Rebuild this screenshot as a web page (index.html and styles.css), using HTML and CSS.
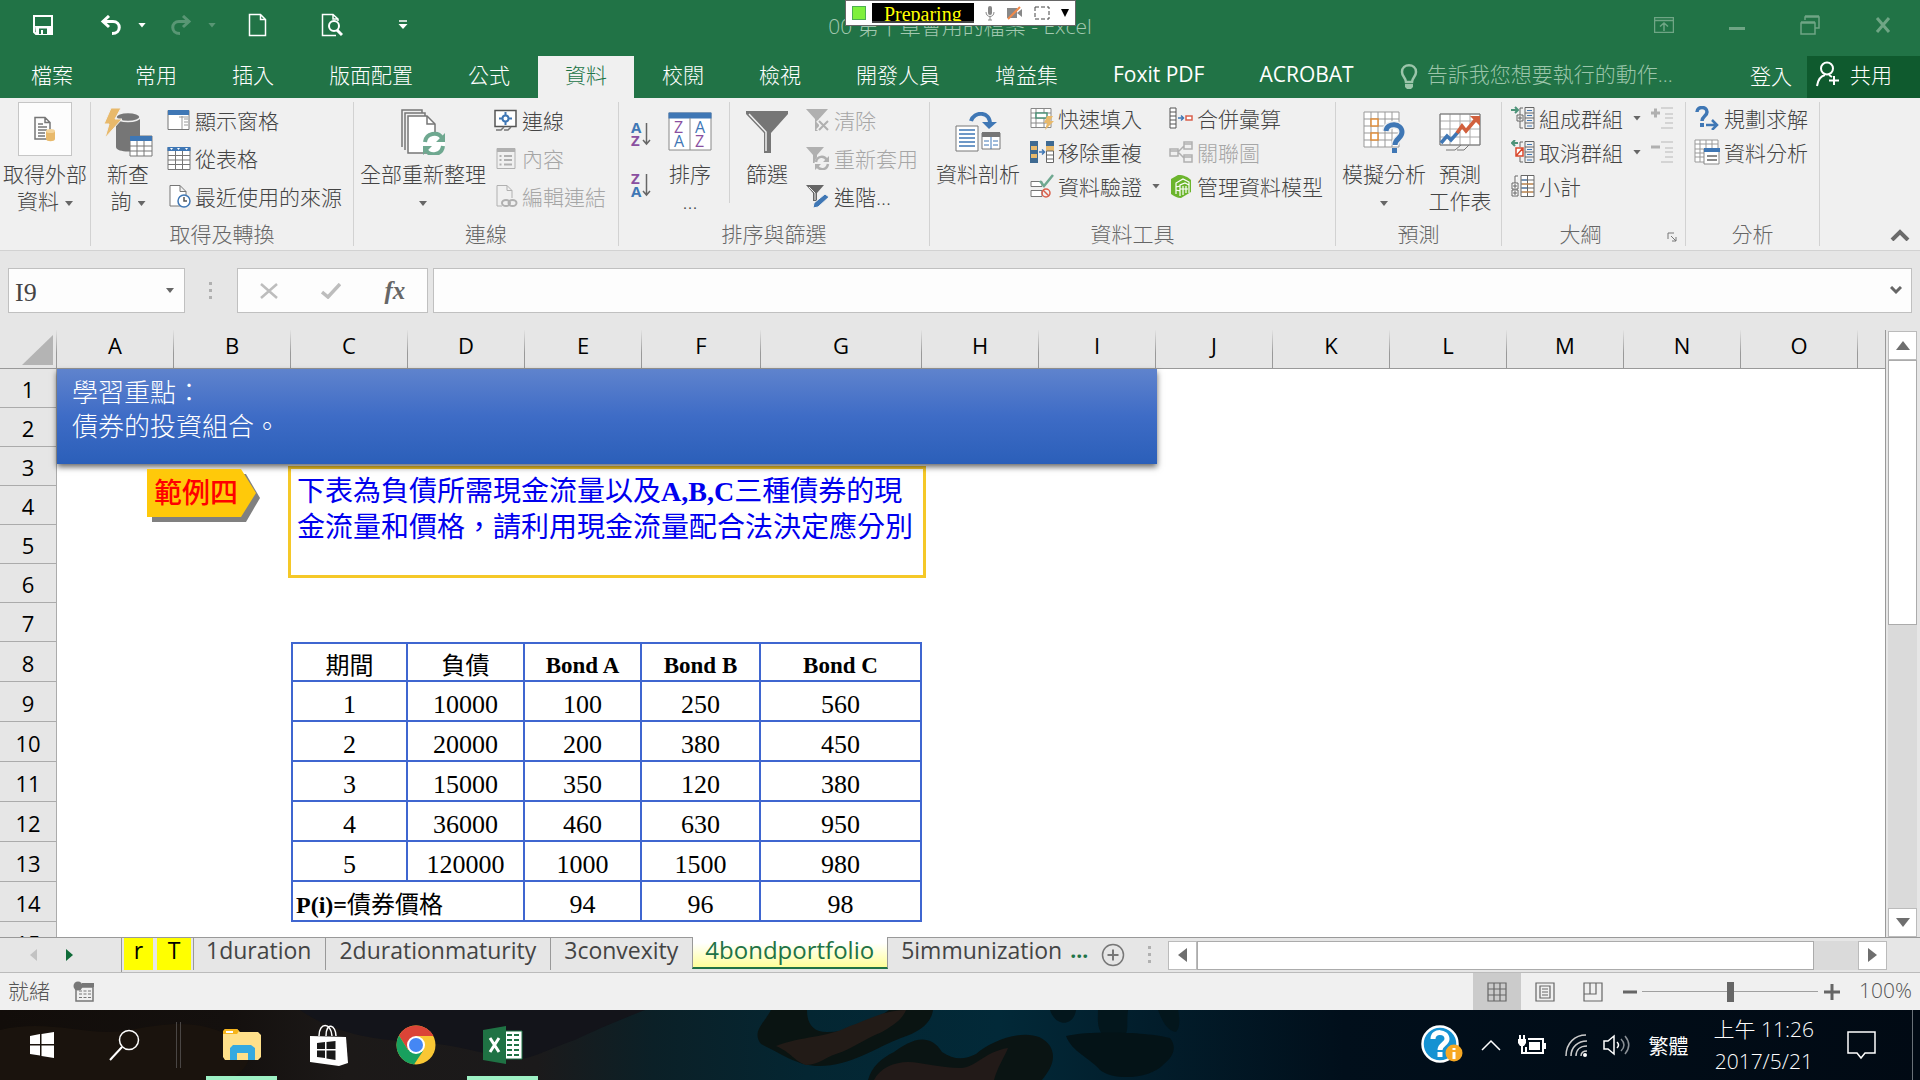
FILE: index.html
```html
<!DOCTYPE html>
<html lang="zh-Hant">
<head>
    <meta charset="UTF-8">
    <meta name="viewport" content="width=device-width, initial-scale=1.0">
    <title>00 第十章會用的檔案 - Excel</title>
    <link rel="stylesheet" href="styles.css">
</head>
<body>
    <header class="titlebar">
        <div class="quick-access">
            <button class="qa-btn" title="儲存檔案"><svg width="20" height="20" viewBox="0 0 20 20"><path d="M1 1h18v18H3l-2-2z" fill="none" stroke="#fff" stroke-width="2"/><path d="M2 11h16v8H3z" fill="#fff"/><path d="M6 13.500h8V19H6z" fill="#217346"/><path d="M8 15h2v4H8z" fill="#fff"/></svg></button>
            <div class="qa-pair">
                <button class="qa-btn" title="復原"><svg width="22" height="20" viewBox="0 0 22 20"><path d="M9 1L3 6.500l6 5.500M3 6.500h10c8 0 9 12-1 12" fill="none" stroke="#fff" stroke-width="3"/></svg></button>
                <button class="arrow" title="復原清單"></button>
            </div>
            <div class="qa-pair faded">
                <button class="qa-btn" title="重複"><svg width="22" height="20" viewBox="0 0 22 20"><path d="M13 1l6 5.500-6 5.500M19 6.500H9c-8 0-9 12 1 12" fill="none" stroke="#fff" stroke-width="3"/></svg></button>
                <button class="arrow" title="重複清單"></button>
            </div>
            <button class="qa-btn qa-new" title="新增"><svg width="20" height="24" viewBox="0 0 20 24"><path d="M1.500 1.500h11l5 5v16h-16zM12.500 1.500v5h5" fill="none" stroke="#fff" stroke-width="1.500"/></svg></button>
            <button class="qa-btn qa-preview" title="預覽列印"><svg width="22" height="24" viewBox="0 0 22 24"><path d="M17 8V6l-5-4.500H1.500v21H15M12 1.500V6h5" fill="none" stroke="#fff" stroke-width="1.500"/><circle cx="13" cy="13" r="5" fill="none" stroke="#fff" stroke-width="2"/><path d="M16 17l5 5" stroke="#fff" stroke-width="3"/></svg></button>
            <button class="qa-more" title="自訂快速存取工具列"><svg width="12" height="10" viewBox="0 0 12 10"><path d="M2 1h8" stroke="#fff" stroke-width="1.500"/><path d="M1.500 4h9L6 9z" fill="#fff"/></svg></button>
        </div>
        <h1 class="doc-title">00 第十章會用的檔案 - Excel</h1>
        <div class="window-btns">
            <button title="功能區顯示選項"><svg width="20" height="16" viewBox="0 0 20 16"><path d="M.500.500h19v15H.500zM.500 3.500h19M10 14V6M6 9.500L10 6l4 3.500" fill="none" stroke="currentColor" stroke-width="1.500"/></svg></button>
            <button title="最小化"><svg width="16" height="16" viewBox="0 0 16 16"><path d="M0 11.500h16" stroke="currentColor" stroke-width="3"/></svg></button>
            <button title="往下還原"><svg width="20" height="20" viewBox="0 0 20 20"><path d="M5 5V2h14v11h-4M5 1h14" fill="none" stroke="currentColor" stroke-width="1.500"/><path d="M1 8h14v11H1zM1 7h14" fill="none" stroke="currentColor" stroke-width="1.500"/></svg></button>
            <button title="關閉"><svg width="16" height="16" viewBox="0 0 16 16"><path d="M2 1l12 14M14 1L2 15" stroke="currentColor" stroke-width="3"/></svg></button>
        </div>
        <!-- 錄影工具列 -->
        <div class="recorder">
            <span class="rec-light"></span>
            <span class="rec-state">Preparing</span>
            <svg width="10" height="15" viewBox="0 0 10 15"><rect x="3" width="4" height="9" rx="2" fill="#888"/><path d="M1 6c0 6 8 6 8 0M5 11v3M3 14h4" fill="none" stroke="#888"/></svg>
            <svg width="17" height="14" viewBox="0 0 17 14"><path d="M1 2h10v10H1zM11 7l5-4v8z" fill="#888"/><path d="M2 13L14 1" stroke="#f08a4b" stroke-width="2"/></svg>
            <svg width="16" height="14" viewBox="0 0 16 14"><rect x="1" y="1" width="14" height="12" fill="none" stroke="#444" stroke-dasharray="4 2"/></svg>
            <svg width="8" height="8" viewBox="0 0 8 8"><path d="M0 0h8L4 8z"/></svg>
        </div>
    </header>

    <nav class="tabs">
        <button class="tab file">檔案</button>
        <button class="tab">常用</button>
        <button class="tab">插入</button>
        <button class="tab">版面配置</button>
        <button class="tab">公式</button>
        <button class="tab active">資料</button>
        <button class="tab">校閱</button>
        <button class="tab">檢視</button>
        <button class="tab">開發人員</button>
        <button class="tab">增益集</button>
        <button class="tab latin">Foxit PDF</button>
        <button class="tab latin">ACROBAT</button>
        <label class="tell-me">
            <svg width="18" height="26" viewBox="0 0 18 26"><path d="M6 18c0-4-4-5-4-10 0-9 14-9 14 0 0 5-4 6-4 10z" fill="none" stroke="#9bc5aa" stroke-width="2.500"/><path d="M5 20h8v3l-2 2H7l-2-2z" fill="#9bc5aa"/></svg>
            <input type="text" placeholder="告訴我您想要執行的動作..." aria-label="告訴我您想要執行的動作">
        </label>
        <button class="sign-in">登入</button>
        <button class="share">
            <svg width="24" height="26" viewBox="0 0 24 26"><circle cx="11" cy="7.500" r="6" fill="none" stroke="#fff" stroke-width="2"/><path d="M1 25c1-7 4-10 8-11M13 14l3 2M18 15v9M13 19.500h10" fill="none" stroke="#fff" stroke-width="2"/></svg>
            共用
        </button>
    </nav>

    <section class="ribbon">
        <div class="group g-external">
            <div class="group-body">
                <button class="big">
                    <span class="big-icon"><span class="framed"><svg width="24" height="26" viewBox="0 0 24 26"><path d="M2 1.500h10l5 5V23H2zM12 1.500v5h5M5 8h5M5 11h9M5 14h9M5 17h7M5 20h7" fill="none" stroke="#767676" stroke-width="1.500"/><path d="M13 15v8c0 3 9 3 9 0v-8z" fill="#e8b96b"/><ellipse cx="17.500" cy="15" rx="4.500" ry="2" fill="#f3d49c"/></svg></span></span>
                    取得外部<br>資料<i class="arrow"></i>
                </button>
            </div>
        </div>

        <div class="group g-transform">
            <div class="group-body">
                <button class="big">
                    <span class="big-icon"><svg width="50" height="50" viewBox="0 0 50 50"><path d="M13 10v30c0 6 24 6 24 0V10z" fill="#767676"/><ellipse cx="25" cy="10" rx="12" ry="4.500" fill="#767676" stroke="#f0f0f0" stroke-width="1.500"/><path d="M8 1h10l-6 11h7L2 31l4-14H1z" fill="#e8b96b" stroke="#f0f0f0"/><path d="M27 29h22v20H27z" fill="#fff" stroke="#767676"/><path d="M27 29h22v5H27z" fill="#3f77b5"/><path d="M27 39h22M27 44h22M34 34v15M41 34v15" stroke="#767676"/></svg></span>
                    新查<br>詢<i class="arrow"></i>
                </button>
                <div class="list">
                    <button class="cmd"><svg width="24" height="24" viewBox="0 0 24 24"><path d="M1 2.500h21v19H1z" fill="#fff" stroke="#767676"/><path d="M1 2h21v5H1z" fill="#3f77b5"/><path d="M15 8v13M17 11h4M17 14h4M17 17h4M12 9h9" stroke="#999"/></svg>顯示窗格</button>
                    <button class="cmd"><svg width="24" height="24" viewBox="0 0 24 24"><path d="M1 1.500h22v22H1z" fill="#fff" stroke="#767676"/><path d="M.500 1h23v4H.500z" fill="#3f77b5"/><path d="M3 2h3l-1.500 2zM10 2h3l-1.500 2zM18 2h3l-1.500 2z" fill="#fff"/><path d="M1 9.500h22M1 14h22M1 18.500h22M8.500 5v18M15.500 5v18" stroke="#767676"/></svg>從表格</button>
                    <button class="cmd"><svg width="24" height="24" viewBox="0 0 24 24"><path d="M3 1.500h10l6 6V22H3zM13 1.500v6h6" fill="#fff" stroke="#767676"/><circle cx="17" cy="17" r="6" fill="#fff" stroke="#3f77b5" stroke-width="1.500"/><path d="M17 13v4h3" fill="none" stroke="#555" stroke-width="1.500"/></svg>最近使用的來源</button>
                </div>
            </div>
            <div class="group-name">取得及轉換</div>
        </div>

        <div class="group g-connect">
            <div class="group-body">
                <button class="big wide">
                    <span class="big-icon"><svg width="46" height="46" viewBox="0 0 46 46"><path d="M2 38V1h20v3M5 41V4h20v3" fill="none" stroke="#767676" stroke-width="1.500"/><path d="M8 7h19l8 8v29H8z" fill="#fff" stroke="#767676" stroke-width="1.500"/><path d="M27 7v8h8" fill="none" stroke="#767676" stroke-width="1.500"/><circle cx="34" cy="35" r="11" fill="#fff"/><path d="M25 33c1-9 13-11 17-4M43 37c-1 9-13 11-17 4" fill="none" stroke="#6fa890" stroke-width="4"/><path d="M45 24v9h-9zM23 46v-9h9z" fill="#6fa890"/></svg></span>
                    全部重新整理<br><i class="arrow"></i>
                </button>
                <div class="list">
                    <button class="cmd"><svg width="24" height="24" viewBox="0 0 24 24"><path d="M1 2.500h21v16H1z" fill="#fff" stroke="#555" stroke-width="1.500"/><circle cx="11.500" cy="10.500" r="3" fill="none" stroke="#3f77b5" stroke-width="2"/><path d="M11.500 4v4M11.500 13v4M5 10.500h4M14 10.500h4" stroke="#3f77b5" stroke-width="2"/><path d="M2 22h5l3-3M10 22h4l3-3" fill="none" stroke="#767676" stroke-width="1.500"/></svg>連線</button>
                    <button class="cmd" disabled><svg width="24" height="24" viewBox="0 0 24 24"><path d="M3 2.500h18v20H3z" fill="none" stroke="#b0b0b0"/><path d="M3 2h18v4H3z" fill="#b0b0b0"/><path d="M10 10h8M10 14h8M10 18.500h8M5.500 10h2M5.500 14h2M5.500 18.500h2" stroke="#b0b0b0" stroke-width="2"/></svg>內容</button>
                    <button class="cmd" disabled><svg width="24" height="24" viewBox="0 0 24 24"><path d="M8 22H3V1.500h10l5 5V14M13 1.500v5h5" fill="none" stroke="#b0b0b0"/><ellipse cx="12" cy="19" rx="4" ry="3" fill="none" stroke="#b0b0b0" stroke-width="2"/><ellipse cx="18.500" cy="19" rx="4" ry="3" fill="none" stroke="#b0b0b0" stroke-width="2"/></svg>編輯連結</button>
                </div>
            </div>
            <div class="group-name">連線</div>
        </div>

        <div class="group g-sort">
            <div class="group-body">
                <div class="az">
                    <button title="從A到Z排序"><svg width="22" height="28" viewBox="0 0 22 28"><text x="1" y="13" class="az-a">A</text><text x="1" y="26" class="az-z">Z</text><path d="M16.500 3v21M13 20l3.500 4 3.500-4" fill="none" stroke="#666" stroke-width="1.500"/></svg></button>
                    <button title="從Z到A排序"><svg width="22" height="28" viewBox="0 0 22 28"><text x="1" y="13" class="az-z">Z</text><text x="1" y="26" class="az-a">A</text><path d="M16.500 3v21M13 20l3.500 4 3.500-4" fill="none" stroke="#666" stroke-width="1.500"/></svg></button>
                </div>
                <button class="big sort">
                    <span class="big-icon"><svg width="44" height="40" viewBox="0 0 44 40"><path d="M1 1h42v37H1z" fill="#fff" stroke="#888"/><path d="M.500.500h43v6H.500z" fill="#3f77b5"/><path d="M22 6v32" stroke="#888"/><text x="6" y="21" class="az-z thin">Z</text><text x="6" y="35" class="az-a thin">A</text><text x="27" y="21" class="az-a thin">A</text><text x="27" y="35" class="az-z thin">Z</text></svg></span>
                    排序<br>...
                </button>
                <button class="big filter">
                    <span class="big-icon"><svg width="42" height="44" viewBox="0 0 42 44"><path d="M0 1h42v3L25 23v20h-7V23L0 4z" fill="#767676"/><path d="M3 4l17 18v19" fill="none" stroke="#f0f0f0" stroke-width="1.500"/></svg></span>
                    篩選
                </button>
                <div class="list">
                    <button class="cmd" disabled><svg width="24" height="24" viewBox="0 0 24 24"><path d="M0 1h22l-9 10v12H9V11z" fill="#b0b0b0"/><path d="M12 12l10 11M22 12L12 23" stroke="#f0f0f0" stroke-width="5"/><path d="M13 13l9 9M22 13l-9 9" stroke="#b0b0b0" stroke-width="2"/></svg>清除</button>
                    <button class="cmd" disabled><svg width="24" height="24" viewBox="0 0 24 24"><path d="M0 1h18l-7 8v8H7V9z" fill="#b0b0b0"/><circle cx="16" cy="17" r="7.500" fill="#f0f0f0"/><path d="M10 16c1-6 8-7 11-2M22 18c-1 6-8 7-11 2" fill="none" stroke="#b0b0b0" stroke-width="2.500"/><path d="M23 10v6h-6zM9 24v-6h6z" fill="#b0b0b0"/></svg>重新套用</button>
                    <button class="cmd"><svg width="24" height="24" viewBox="0 0 24 24"><path d="M0 1h18l-7 8v8H7V9z" fill="#666"/><path d="M3 3l6 6v7" fill="none" stroke="#f0f0f0"/><path d="M19 10l4 3-11 10-5 1 1-5z" fill="#3f77b5" stroke="#f0f0f0"/></svg>進階...</button>
                </div>
            </div>
            <div class="group-name">排序與篩選</div>
        </div>

        <div class="group g-tools">
            <div class="group-body">
                <button class="big four">
                    <span class="big-icon"><svg width="46" height="40" viewBox="0 0 46 40"><path d="M1 14h22v25H1z" fill="#fff" stroke="#767676"/><path d="M4 18h16M4 22h16M4 26h16M4 30h16M4 34h16" stroke="#3f77b5" stroke-width="1.500"/><path d="M27 21h18v16H27z" fill="#fff" stroke="#767676"/><path d="M27 20h18v5H27z" fill="#767676"/><path d="M36 25v12M29 29h5M29 33h5M38 29h5M38 33h5" stroke="#3f77b5"/><path d="M16 9c3-10 19-10 19 3" fill="none" stroke="#3f77b5" stroke-width="4"/><path d="M27 10h15l-8 7z" fill="#3f77b5"/></svg></span>
                    資料剖析
                </button>
                <div class="list compact">
                    <button class="cmd"><svg width="24" height="24" viewBox="0 0 24 24"><path d="M1 2.500h20v19H1zM1 7h20M1 12h20M1 17h20M6 2v20M14 2v20" fill="#fff" stroke="#888"/><path d="M6 7h11v5H6z" fill="#fff" stroke="#4d9379" stroke-width="1.500"/><path d="M17 10h6l-3 5h4l-9 9 2-7h-3z" fill="#e8b96b"/></svg>快速填入</button>
                    <button class="cmd"><svg width="24" height="24" viewBox="0 0 24 24"><path d="M0 1h8v22H0z" fill="#3f6a92"/><path d="M1 6h6v4H1zM1 14h6v4H1z" fill="#e8b96b"/><path d="M16 1h8v5h-8z" fill="#3f6a92"/><path d="M16 6h8v5h-8z" fill="#e8b96b"/><path d="M16.500 11h7v11.500h-7zM16 15h8M16 19h8" fill="#fff" stroke="#666"/><path d="M9 12h5M12 9.500l2.500 2.500-2.500 2.500" fill="none" stroke="#3f77b5" stroke-width="1.500"/></svg>移除重複</button>
                    <button class="cmd"><svg width="24" height="24" viewBox="0 0 24 24"><path d="M1 7.500h11v5H1zM1 16.500h11v6H1z" fill="#fff" stroke="#767676"/><path d="M10 7l4 5 9-11" fill="none" stroke="#6fa890" stroke-width="2.500"/><circle cx="16" cy="19" r="4" fill="none" stroke="#d9604c" stroke-width="1.500"/><path d="M13 16l6 6" stroke="#d9604c" stroke-width="1.500"/></svg>資料驗證<i class="arrow"></i></button>
                </div>
                <div class="list compact second">
                    <button class="cmd"><svg width="24" height="24" viewBox="0 0 24 24"><path d="M1 2h6v20H1zM1 6h6M1 10h6M1 14h6M1 18h6" fill="#fff" stroke="#555"/><path d="M9 12h5M12 9.500l2.500 2.500-2.500 2.500" fill="none" stroke="#3f77b5" stroke-width="1.500"/><path d="M17 10h6v4h-6z" fill="#fff" stroke="#d9604c" stroke-width="1.500"/></svg>合併彙算</button>
                    <button class="cmd" disabled><svg width="24" height="24" viewBox="0 0 24 24"><path d="M1 9h8v7H1zM15 2h8v7h-8zM15 15h8v7h-8zM9 12l6-6M9 12l6 6M1 11h8M15 4h8M15 17h8" fill="none" stroke="#b0b0b0" stroke-width="1.500"/></svg>關聯圖</button>
                    <button class="cmd"><svg width="24" height="24" viewBox="0 0 24 24"><path d="M2 5l7-4c6 0 10 2 13 5v12l-10 6c-4 0-7-2-10-4z" fill="#6cb52d"/><path d="M7 20V9l7-4 6 3v11M11 22V11l5-2 4 2M7 13l4-1M7 16l4 1M14 12v9M17 12v7M11 15h8" fill="none" stroke="#fff" stroke-width="1.200"/></svg>管理資料模型</button>
                </div>
            </div>
            <div class="group-name">資料工具</div>
        </div>

        <div class="group g-forecast">
            <div class="group-body">
                <button class="big four">
                    <span class="big-icon"><svg width="42" height="42" viewBox="0 0 42 42"><path d="M1 1h35v35H1zM1 8h35M1 15h35M1 22h35M1 29h35M8 1v35M15 1v35M22 1v35M29 1v35" fill="#fff" stroke="#999"/><path d="M8 8h7v7H8zM8 22h7v7H8z" fill="#fff" stroke="#e08e3c" stroke-width="1.500"/><path d="M23 20c1-9 16-8 16 1 0 7-7 6-7 13" fill="none" stroke="#f0f0f0" stroke-width="8"/><path d="M23 20c1-9 16-8 16 1 0 7-7 6-7 13" fill="none" stroke="#3f77b5" stroke-width="5"/><path d="M29 37h5v5h-5z" fill="#3f77b5"/></svg></span>
                    模擬分析<br><i class="arrow"></i>
                </button>
                <button class="big forecast">
                    <span class="big-icon"><svg width="42" height="38" viewBox="0 0 42 38"><path d="M1 1h40v31H1zM1 8h40M1 16h40M1 24h40M11 1v31M21 1v31M31 1v31" fill="#fff" stroke="#aaa"/><path d="M1 1h40v31H1zM7 37h9l6-5M18 37h7l5-5" fill="none" stroke="#777"/><path d="M2 30l6-7 4 4 8-9" fill="none" stroke="#3f77b5" stroke-width="3.500"/><path d="M18 20l5-7 4 5L38 5" fill="none" stroke="#d1603d" stroke-width="3.500"/><path d="M31 3h10v10z" fill="#d1603d"/></svg></span>
                    預測<br>工作表
                </button>
            </div>
            <div class="group-name">預測</div>
        </div>

        <div class="group g-outline">
            <div class="group-body">
                <div class="list compact">
                    <button class="cmd"><svg width="24" height="24" viewBox="0 0 24 24"><path d="M0 4h6M4 1l3 3-3 3" fill="none" stroke="#4d9379" stroke-width="2"/><path d="M12 2H9v7M9 15v7h3M6 9h6v6H6zM7 12h4M9 10v4M14 1.500h9v21h-9zM14 7h9M14 12h9M14 17h9" fill="none" stroke="#666"/><path d="M16 4.500h5M16 9.500h5M16 14.500h5M16 20h5" stroke="#3f77b5"/></svg>組成群組<i class="arrow"></i></button>
                    <button class="cmd"><svg width="24" height="24" viewBox="0 0 24 24"><path d="M7 3H1M4 0L1 3l3 3" fill="none" stroke="#4d9379" stroke-width="2"/><path d="M12 2H9v5M9 17v5h3M14 1.500h9v21h-9zM14 7h9M14 12h9M14 17h9" fill="none" stroke="#666"/><path d="M5 8h7v8H5zM5 16l7-8" fill="#fff" stroke="#d9482c" stroke-width="1.500"/><path d="M16 4.500h5M16 9.500h5M16 14.500h5M16 20h5" stroke="#3f77b5"/></svg>取消群組<i class="arrow"></i></button>
                    <button class="cmd"><svg width="24" height="24" viewBox="0 0 24 24"><path d="M7 2H4v7M1 9h6v6H1zM1 16h6v6H1zM2 12h4M4 10v4M2 19h4M4 17v4M10 1.500h13v21H10zM10 6h13M10 10h13M10 14h13M10 18h13M16.500 1v22" fill="#fff" stroke="#666"/><path d="M11 10h11M11 18h11" stroke="#e08e3c"/><path d="M11 6h5M11 14h5" stroke="#3f77b5"/></svg>小計</button>
                </div>
                <div class="list compact detail">
                    <button class="cmd" disabled title="顯示詳細資料"><svg width="24" height="24" viewBox="0 0 24 24"><path d="M0 7h9M4.500 2.500v9" stroke="#b0b0b0" stroke-width="3"/><path d="M10 2h12M14 8h8M14 12h8M14 17h8M10 22h12" stroke="#b8b8b8"/></svg></button>
                    <button class="cmd" disabled title="隱藏詳細資料"><svg width="24" height="24" viewBox="0 0 24 24"><path d="M0 7h9" stroke="#b0b0b0" stroke-width="3"/><path d="M10 2h12M14 8h8M14 12h8M14 17h8M10 22h12" stroke="#b8b8b8"/></svg></button>
                </div>
            </div>
            <div class="group-name">大綱</div>
            <button class="launcher" title="大綱設定"><svg width="10" height="10" viewBox="0 0 10 10"><path d="M1 7V1h6M4 4l5 5M9 5v4H5" fill="none" stroke="#777"/></svg></button>
        </div>

        <div class="group g-analysis">
            <div class="group-body">
                <div class="list compact">
                    <button class="cmd"><svg width="26" height="24" viewBox="0 0 26 24"><path d="M3 6c0-6 10-6 10 0 0 4-5 4-5 9" fill="none" stroke="#3f77b5" stroke-width="3.500"/><path d="M6 17h4v4H6z" fill="#3f77b5"/><path d="M12 19h11M18 14l5 5-5 5" fill="none" stroke="#3f77b5" stroke-width="2.500"/></svg>規劃求解</button>
                    <button class="cmd"><svg width="26" height="26" viewBox="0 0 26 26"><path d="M1 1h23v22H1zM1 5h23M1 10h23M1 14h23M1 18h23M6 1v22M12 1v22M18 1v22" fill="#fff" stroke="#999"/><path d="M10 10h15v15H10z" fill="#fff" stroke="#888"/><path d="M10 9h16v4H10z" fill="#3f77b5"/><path d="M13 17h10M13 21h10" stroke="#666" stroke-width="1.500"/></svg>資料分析</button>
                </div>
            </div>
            <div class="group-name">分析</div>
        </div>
        <button class="collapse" title="摺疊功能區"><svg width="20" height="12" viewBox="0 0 20 12"><path d="M2 11l8-8 8 8" fill="none" stroke="#6a6a6a" stroke-width="4"/></svg></button>
    </section>

    <section class="formula-bar">
        <div class="name-box">
            <input type="text" value="I9" aria-label="名稱方塊">
            <i class="arrow"></i>
        </div>
        <span class="dots"></span>
        <div class="fx-btns">
            <button title="取消"><svg width="18" height="16" viewBox="0 0 18 16"><path d="M1 1l16 14M17 1L1 15" stroke="#bdbdbd" stroke-width="2.500"/></svg></button>
            <button title="輸入"><svg width="20" height="16" viewBox="0 0 20 16"><path d="M1 9l6 5L19 1" fill="none" stroke="#bdbdbd" stroke-width="3.500"/></svg></button>
            <button class="fx" title="插入函數">fx</button>
        </div>
        <div class="formula">
            <input type="text" aria-label="資料編輯列">
            <svg width="12" height="9" viewBox="0 0 12 9"><path d="M1 1l5 5 5-5" fill="none" stroke="#666" stroke-width="3"/></svg>
        </div>
    </section>

    <main class="workspace">
        <div class="sheet">
            <table class="grid">
                <colgroup>
                    <col class="c-head"><col><col><col><col><col><col class="c-f"><col class="c-g"><col><col><col><col><col><col><col><col><col class="c-rest">
                </colgroup>
                <thead>
                    <tr><th class="corner"></th><th>A</th><th>B</th><th>C</th><th>D</th><th>E</th><th>F</th><th>G</th><th>H</th><th>I</th><th>J</th><th>K</th><th>L</th><th>M</th><th>N</th><th>O</th><th></th></tr>
                </thead>
                <tbody>
                    <tr><th>1</th><td colspan="16"></td></tr>
                    <tr><th>2</th><td colspan="16"></td></tr>
                    <tr><th>3</th><td colspan="16"></td></tr>
                    <tr><th>4</th><td colspan="16"></td></tr>
                    <tr><th>5</th><td colspan="16"></td></tr>
                    <tr><th>6</th><td colspan="16"></td></tr>
                    <tr><th>7</th><td colspan="16"></td></tr>
                    <tr class="bond head"><th>8</th><td colspan="2"></td><td class="b first">期間</td><td class="b">負債</td><td class="b">Bond A</td><td class="b">Bond B</td><td class="b">Bond C</td><td colspan="9"></td></tr>
                    <tr class="bond"><th>9</th><td colspan="2"></td><td class="b first">1</td><td class="b">10000</td><td class="b">100</td><td class="b">250</td><td class="b">560</td><td colspan="9"></td></tr>
                    <tr class="bond"><th>10</th><td colspan="2"></td><td class="b first">2</td><td class="b">20000</td><td class="b">200</td><td class="b">380</td><td class="b">450</td><td colspan="9"></td></tr>
                    <tr class="bond"><th>11</th><td colspan="2"></td><td class="b first">3</td><td class="b">15000</td><td class="b">350</td><td class="b">120</td><td class="b">380</td><td colspan="9"></td></tr>
                    <tr class="bond"><th>12</th><td colspan="2"></td><td class="b first">4</td><td class="b">36000</td><td class="b">460</td><td class="b">630</td><td class="b">950</td><td colspan="9"></td></tr>
                    <tr class="bond"><th>13</th><td colspan="2"></td><td class="b first">5</td><td class="b">120000</td><td class="b">1000</td><td class="b">1500</td><td class="b">980</td><td colspan="9"></td></tr>
                    <tr class="bond"><th>14</th><td colspan="2"></td><td class="b first price" colspan="2"><b>P(i)=</b>債券價格</td><td class="b">94</td><td class="b">96</td><td class="b">98</td><td colspan="9"></td></tr>
                    <tr class="bond"><th>15</th><td colspan="16"></td></tr>
                </tbody>
            </table>
            <div class="shape question">下表為負債所需現金流量以及<b>A,B,C</b>三種債券的現金流量和價格，請利用現金流量配合法決定應分別</div>
            <div class="shape banner">學習重點：<br>債券的投資組合。</div>
            <div class="shape example">
                <svg width="114" height="53" viewBox="0 0 114 53"><path d="M5 5h94l14 24-14 24H5z" fill="#808080"/><path d="M0 0h94l15 24-15 24H0z" fill="#ffc90a"/></svg>
                <span>範例四</span>
            </div>
        </div>
        <div class="vscroll">
            <button title="向上捲動"><svg width="14" height="9" viewBox="0 0 14 9"><path d="M0 9h14L7 0z" fill="#6e6e6e"/></svg></button>
            <div class="thumb"></div>
            <div class="track"></div>
            <button title="向下捲動"><svg width="14" height="9" viewBox="0 0 14 9"><path d="M0 0h14L7 9z" fill="#6e6e6e"/></svg></button>
        </div>
    </main>

    <section class="sheet-tabs">
        <div class="sheet-nav">
            <button title="上一個"><svg width="8" height="12" viewBox="0 0 8 12"><path d="M7 0v12L0 6z" fill="#c2c2c2"/></svg></button>
            <button title="下一個"><svg width="8" height="12" viewBox="0 0 8 12"><path d="M0 0v12l7-6z" fill="#0f6b38"/></svg></button>
        </div>
        <button class="sheet-tab yellow">r</button>
        <button class="sheet-tab yellow wide">T</button>
        <button class="sheet-tab">1duration</button>
        <button class="sheet-tab">2durationmaturity</button>
        <button class="sheet-tab last">3convexity</button>
        <button class="sheet-tab current">4bondportfolio</button>
        <button class="sheet-tab cut">5immunization</button>
        <span class="more">...</span>
        <button class="add-sheet" title="新工作表"><svg width="24" height="24" viewBox="0 0 24 24"><circle cx="12" cy="12" r="10.500" fill="none" stroke="#777" stroke-width="1.500"/><path d="M12 6.500v11M6.500 12h11" stroke="#777" stroke-width="2"/></svg></button>
        <span class="dots"></span>
        <div class="hscroll">
            <button title="向左捲動"><svg width="9" height="14" viewBox="0 0 9 14"><path d="M9 0v14L0 7z" fill="#6e6e6e"/></svg></button>
            <div class="thumb"></div>
            <div class="track"></div>
            <button title="向右捲動"><svg width="9" height="14" viewBox="0 0 9 14"><path d="M0 0v14l9-7z" fill="#6e6e6e"/></svg></button>
        </div>
    </section>

    <footer class="status">
        <span class="ready">就緒</span>
        <svg class="macro" width="22" height="22" viewBox="0 0 22 22"><path d="M3 6h17v14H3z" fill="none" stroke="#777" stroke-width="1.500"/><path d="M9 2h12v4H9z" fill="#777"/><circle cx="5" cy="5" r="4.500" fill="#777"/><path d="M6 10h12M6 13h12M6 16.500h12" stroke="#777" stroke-dasharray="3 1.500"/></svg>
        <div class="views">
            <button class="on" title="標準"><svg width="20" height="20" viewBox="0 0 20 20"><path d="M1 1h18v18H1zM1 7h18M1 13h18M7 1v18M13 1v18" fill="none" stroke="#666" stroke-width="1.200"/></svg></button>
            <button title="整頁模式"><svg width="20" height="20" viewBox="0 0 20 20"><path d="M1 1h18v18H1zM5 4h10v12H5zM7 7h6M7 10h6M7 13h6" fill="none" stroke="#666" stroke-width="1.200"/></svg></button>
            <button title="分頁預覽"><svg width="20" height="20" viewBox="0 0 20 20"><path d="M1 1h18v18H1zM1 12h12V1M7 1v11" fill="none" stroke="#666" stroke-width="1.200"/></svg></button>
        </div>
        <button class="zoom-btn" title="縮小"><svg width="16" height="16" viewBox="0 0 16 16"><path d="M1 8h14" stroke="#666" stroke-width="3"/></svg></button>
        <input type="range" class="zoom" min="10" max="190" value="100" aria-label="縮放比例">
        <button class="zoom-btn" title="放大"><svg width="16" height="16" viewBox="0 0 16 16"><path d="M0 8h16M8 0v16" stroke="#666" stroke-width="3"/></svg></button>
        <span class="percent">100%</span>
    </footer>

    <div class="taskbar">
        <!-- 桌布透出的海岸 -->
        <svg class="scenery" viewBox="0 0 1920 70" preserveAspectRatio="none">
            <defs>
                <linearGradient id="sea" x1="0" x2="1" y1="0" y2="0">
                    <stop offset="0" stop-color="#120d0a"/>
                    <stop offset=".12" stop-color="#14100e"/>
                    <stop offset=".18" stop-color="#1c1918"/>
                    <stop offset=".28" stop-color="#1b1a1b"/>
                    <stop offset=".34" stop-color="#0b2027"/>
                    <stop offset=".42" stop-color="#042632"/>
                    <stop offset=".52" stop-color="#022938"/>
                    <stop offset=".6" stop-color="#021d2b"/>
                    <stop offset=".7" stop-color="#010f1b"/>
                    <stop offset="1" stop-color="#010a14"/>
                </linearGradient>
            </defs>
            <path d="M0 0h1920v70H0z" fill="url(#sea)"/>
            <path d="M300 0h345c-20 8-50 20-70 30-20 6-40 18-60 20-30-6-60-16-100-18s-80-8-115-32z" fill="#13141a"/>
            <path d="M0 20c50-12 90 8 130 0s70-10 100 6 20 30 0 44H0z" fill="#1a130d"/>
            <path d="M771 0h36c0 14 6 22 20 22 24 0 46-10 62-22h44c-2 14-14 22-32 28-26 10-50 28-82 28-20 0-34-10-58-22-10-12 4-22 10-34z" fill="#0a1412"/>
            <path d="M776 36c26-10 50-8 74-20 18-6 34-16 56-16-4 10-14 16-24 22-20 8-28 16-46 22-12 4-16 10-30 11-12-4-14-12-30-19z" fill="#221b17"/>
            <path d="M868 70c4-14 14-22 26-28 14-10 34-22 48 0 12 8 22 8 34 2 18-16 60-30 74-8 8 14-2 26-8 34z" fill="#0a1413"/>
            <path d="M874 70c6-12 20-18 34-18s30 6 54 6c16-2 22-16 46-20-4 10-10 18-14 32z" fill="#221a18"/>
            <path d="M1050 0h26c-2 16-20 18-26 0zM1098 0h30c-2 16 2 22-6 28h-16c-10-8-8-18-8-28zM1158 0h20c2 10 2 18-2 22-10-2-14-12-18-22z" fill="#03161c"/>
            <path d="M1066 26c24-6 84-4 104 2 8 10 2 20-6 26-12 14-48 18-64 6-10-12-28-18-34-34z" fill="#041317"/>
        </svg>
        <div class="apps">
            <button class="start" title="開始"><svg width="26" height="26" viewBox="0 0 26 26"><path d="M1 4l10-2v10H1zM12.500 2L25 0v12H12.500zM1 13.500h10v10L1 22zM12.500 13.500H25V26l-12.500-2z" fill="#fff"/></svg></button>
            <button class="search" title="搜尋"><svg width="32" height="32" viewBox="0 0 32 32"><circle cx="20" cy="11" r="9.500" fill="none" stroke="#fff" stroke-width="1.500"/><path d="M13 18L1 31" stroke="#fff" stroke-width="2"/></svg></button>
            <span class="divider"></span>
            <button class="app open" title="檔案總管"><svg width="40" height="34" viewBox="0 0 40 34"><path d="M1 4l2-3h12l3 3h18l3 3v22l-3 3H3l-2-3z" fill="#ffe08a"/><path d="M1 3l2-2h12l2 2-2 3H1z" fill="#f5b41c"/><path d="M4 3h7v2H4z" fill="#fff"/><path d="M8 32V20l3-3h18l4 3v12h-7v-7H15v7z" fill="#35a9e0"/></svg></button>
            <button class="app" title="市集"><svg width="40" height="42" viewBox="0 0 40 42"><path d="M1 12l36 1 2 26-9 3-29-4z" fill="#fff"/><path d="M10 12c0-14 12-14 13 0M17 12c0-15 10-11 10 0" fill="none" stroke="#fff" stroke-width="1.500"/><path d="M8 19l8-1v7H8zM17.500 18l9-1v8h-9zM8 26.500h8V34l-8-1zM17.500 26.500h9V36l-9-1.500z" fill="#191919"/></svg></button>
            <button class="app" title="Google Chrome"><svg width="40" height="40" viewBox="0 0 40 40"><circle cx="20" cy="20" r="19.500" fill="#f9c734"/><path d="M20 .500A19.500 19.500 0 0 0 3 10.500L12 25l8-14h17.500A19.500 19.500 0 0 0 20 .500z" fill="#db4437"/><path d="M3 10.500a19.500 19.500 0 0 0 15 29L27 26l-15-1z" fill="#18a05e"/><circle cx="20" cy="20" r="9" fill="#fff"/><circle cx="20" cy="20" r="7" fill="#4587f4"/></svg></button>
            <button class="app open" title="Excel"><svg width="42" height="38" viewBox="0 0 42 38"><path d="M22 5h18v28H22z" fill="#fff" stroke="#1f7244"/><path d="M25 9h5M32 9h5M25 14h5M32 14h5M25 19h5M32 19h5M25 24h5M32 24h5M25 29h5M32 29h5" stroke="#1f7244" stroke-width="2"/><path d="M1 4l23-4v38L1 34z" fill="#1f7244"/><path d="M8 12l9 14M17 12L8 26" stroke="#fff" stroke-width="3"/></svg></button>
        </div>
        <div class="tray">
            <svg class="help" width="44" height="40" viewBox="0 0 44 40"><circle cx="19" cy="19" r="17.500" fill="#1592d2" stroke="#fff" stroke-width="2.500"/><path d="M12 14c0-9 14-8 14 0 0 5-7 5-7 11" fill="none" stroke="#fff" stroke-width="5"/><path d="M16.500 27h5v5h-5z" fill="#fff"/><circle cx="33" cy="28" r="8.500" fill="#f7a823"/><path d="M33 23v2M33 27v7" stroke="#fff" stroke-width="3"/></svg>
            <svg class="up" width="20" height="12" viewBox="0 0 20 12"><path d="M1 11l9-9 9 9" fill="none" stroke="#fff" stroke-width="1.500"/></svg>
            <svg class="battery" width="28" height="22" viewBox="0 0 28 22"><path d="M10 5h15v14H8v-6" fill="none" stroke="#fff" stroke-width="2"/><path d="M11 8h11v8H11zM26 9h2v6h-2zM0 5h8v4l-2 3H2L0 9zM1 1h2v4H1zM5 1h2v4H5z" fill="#fff"/><path d="M4 12v7h4" fill="none" stroke="#fff" stroke-width="2"/></svg>
            <svg class="wifi" width="24" height="24" viewBox="0 0 24 24"><path d="M1 23C1 10 10 2 21 2M6 23c0-9 7-15 16-15M11 23c0-6 4-10 11-10M16 23c0-3 2-5 6-5" fill="none" stroke="#ccc" stroke-width="1.500"/><circle cx="20" cy="22" r="2" fill="#fff"/></svg>
            <svg class="volume" width="27" height="22" viewBox="0 0 27 22"><path d="M1 7h4l6-5v18l-6-5H1zM14 8c2 2 2 4 0 6" fill="none" stroke="#fff" stroke-width="1.500"/><path d="M18 5c4 4 4 8 0 12M22 2c5 6 5 12 0 18" fill="none" stroke="#8a9096" stroke-width="1.500"/></svg>
            <span class="ime">繁體</span>
            <time class="clock">上午 11:26<br>2017/5/21</time>
            <svg class="notice" width="29" height="29" viewBox="0 0 29 29"><path d="M1 1h27v21H18l-4 5-4-5H1z" fill="none" stroke="#fff" stroke-width="1.500"/></svg>
            <span class="peek"></span>
        </div>
    </div>
</body>
</html>
```
FILE: styles.css
```css
* {
    margin: 0;
    padding: 0;
    box-sizing: border-box;
}

body {
    display: flex;
    flex-direction: column;
    height: 100vh;
    overflow: hidden;
    background: #e6e6e6;
    color: #444;
    font-family: "Open Sans", "Noto Sans CJK TC", sans-serif;
    font-size: 21px;
    font-weight: 300;
}

button,
input {
    font: inherit;
    color: inherit;
    background: none;
    border: none;
    outline: none;
}

button {
    white-space: nowrap;
}

svg {
    display: block;
    flex-shrink: 0;
}

.arrow {
    display: inline-block;
    width: 8px;
    height: 5px;
    background: #666;
    clip-path: polygon(0 0, 100% 0, 50% 100%);
    vertical-align: middle;
}

/* 標題列 */
.titlebar {
    position: relative;
    display: flex;
    justify-content: space-between;
    height: 56px;
    padding: 0 14px 6px 18px;
    background: #217346;
    color: #6fa585;
}

.quick-access,
.qa-pair,
.window-btns {
    display: flex;
    align-items: center;
}

.qa-btn {
    display: flex;
    justify-content: center;
    width: 50px;
}

.qa-pair {
    margin-left: 8px;
}

.qa-btn + .qa-pair {
    margin-left: 18px;
}

.qa-pair .arrow {
    margin: 0 2px;
    background: #fff;
}

.faded {
    opacity: 0.25;
}

.qa-new {
    margin-left: 15px;
}

.qa-preview {
    margin-left: 24px;
}

.qa-more {
    margin-left: 40px;
}

.doc-title {
    position: absolute;
    top: 11px;
    left: 0;
    right: 0;
    text-align: center;
    font-size: 21px;
    font-weight: 300;
    line-height: 30px;
    color: #a3c9b1;
}

.window-btns button {
    display: flex;
    justify-content: center;
    width: 46px;
    margin-left: 27px;
}

.recorder {
    position: absolute;
    top: 0;
    left: 44%;
    display: flex;
    align-items: center;
    gap: 11px;
    width: 231px;
    height: 26px;
    padding: 0 6px;
    background: #fff;
    border: 1px solid #666;
}

.rec-light {
    width: 14px;
    height: 14px;
    background: #7ff03c;
    border: 1px solid #4caf50;
}

.rec-state {
    width: 102px;
    height: 20px;
    margin-left: -5px;
    overflow: hidden;
    background: #000;
    border-bottom: 2px solid #444;
    color: #ff0;
    font-family: "Liberation Serif", serif;
    font-size: 20px;
    font-weight: 400;
    line-height: 22px;
    text-align: center;
}

/* 功能區索引標籤 */
.tabs {
    display: flex;
    height: 42px;
    gap: 1px;
    padding-left: 4px;
    background: #217346;
    color: #fff;
}

.tab {
    padding: 0 27px 6px;
}

.tab.latin {
    font-weight: 400;
}

.tab.file {
    margin-right: 7px;
}

.tab.active {
    background: #f0f0f0;
    color: #217346;
}

.tell-me {
    display: flex;
    align-items: center;
    gap: 9px;
    margin-left: 18px;
    flex: 1;
}

.tell-me input {
    flex: 1;
    min-width: 0;
    padding-bottom: 6px;
}

.tell-me input::placeholder {
    color: #9bc5aa;
    opacity: 1;
}

.sign-in {
    padding: 0 14px 4px;
}

.share {
    display: flex;
    align-items: center;
    gap: 10px;
    padding: 0 28px 6px 9px;
    background: #0f5a2e;
}

/* 功能區 */
.ribbon {
    display: flex;
    height: 153px;
    padding: 4px 0;
    background: #f0f0f0;
    border-bottom: 1px solid #d2d2d2;
}

.group {
    position: relative;
    display: flex;
    flex-direction: column;
    flex-shrink: 0;
    border-right: 1px solid #d2d2d2;
}

.group-body {
    display: flex;
    flex: 1;
    align-items: flex-start;
}

.group-name {
    height: 24px;
    line-height: 24px;
    text-align: center;
    color: #666;
}

.g-external { width: 91px; }
.g-transform { width: 263px; }
.g-connect { width: 265px; }
.g-sort { width: 311px; }
.g-tools { width: 406px; }
.g-forecast { width: 166px; }
.g-outline { width: 184px; }
.g-analysis { width: 134px; }

.g-transform .group-body { padding-left: 9px; }
.g-connect .group-body { padding-left: 6px; }
.g-sort .group-body { padding-left: 11px; }
.g-tools .group-body { padding-left: 4px; }
.g-forecast .group-body { padding-left: 4px; }
.g-outline .group-body { padding-left: 9px; }
.g-analysis .group-body { padding-left: 8px; }

.g-outline .group-name {
    padding-right: 26px;
}

.big {
    width: 56px;
    line-height: 27px;
    text-align: center;
}

.big .arrow {
    margin-left: 6px;
}

.big br + .arrow {
    margin-left: 0;
}

.g-external .big {
    width: 90px;
}

.g-external .big .arrow,
.g-transform .big .arrow {
    margin-left: 6px;
}

.big.wide {
    width: 126px;
}

.big.four {
    width: 88px;
}

.big.sort {
    width: 60px;
    margin-left: 8px;
}

.big.filter {
    width: 69px;
    margin-left: 9px;
    padding: 0 0 15px 6px;
    border-left: 1px solid #d2d2d2;
}

.big.forecast {
    width: 64px;
}

.big-icon {
    display: flex;
    align-items: center;
    justify-content: center;
    height: 59px;
}

.framed {
    display: flex;
    align-items: center;
    justify-content: center;
    width: 54px;
    height: 54px;
    margin-bottom: 6px;
    background: #fdfdfd;
    border: 1px solid #c6c6c6;
}

.list {
    display: grid;
    grid-auto-rows: 38px;
    margin-left: 8px;
}

.g-transform .list {
    margin-left: 11px;
}

.list.compact {
    grid-auto-rows: 34px;
}

.g-outline .list,
.g-analysis .list {
    margin-left: 0;
}

.list.second {
    margin-left: 9px;
}

.g-outline .list.detail {
    margin-left: 10px;
}

.cmd {
    display: flex;
    align-items: center;
    gap: 4px;
    padding-bottom: 2px;
}

.cmd .arrow {
    margin-left: 6px;
}

.cmd:disabled {
    color: #a6a6a6;
}

.az {
    display: flex;
    flex-direction: column;
    gap: 23px;
    padding-top: 18px;
}

.az-a,
.az-z {
    font-family: "Open Sans", sans-serif;
    font-size: 15px;
    font-weight: 700;
    fill: #3f77b5;
}

.az-z {
    fill: #8a4fa0;
}

.thin {
    font-size: 16px;
    font-weight: 400;
}

.launcher {
    position: absolute;
    right: 8px;
    bottom: 4px;
}

.collapse {
    align-self: flex-end;
    margin: 0 10px 5px auto;
}

/* 資料編輯列 */
.formula-bar {
    display: flex;
    height: 79px;
    padding: 17px 8px;
}

.name-box,
.fx-btns,
.formula {
    display: flex;
    align-items: center;
    height: 45px;
    background: #fdfdfd;
    border: 1px solid #c0c0c0;
}

.name-box {
    width: 177px;
    padding: 0 10px 0 6px;
}

.name-box input {
    flex: 1;
    min-width: 0;
    padding-top: 4px;
    font-family: "Liberation Serif", serif;
    font-size: 26px;
    font-weight: 400;
}

.dots {
    align-self: center;
    width: 3px;
    height: 18px;
    background: repeating-linear-gradient(#b0b0b0 0 3px, transparent 3px 7px);
}

.formula-bar .dots {
    margin: 0 25px 0 24px;
}

.fx-btns {
    width: 191px;
    margin-right: 5px;
    justify-content: space-around;
}

.fx {
    font-family: "Liberation Serif", serif;
    font-size: 25px;
    font-style: italic;
    font-weight: 700;
    color: #666;
}

.formula {
    flex: 1;
    padding-right: 9px;
}

.formula input {
    flex: 1;
}

/* 工作表 */
.workspace {
    display: flex;
    flex: 1;
    min-height: 0;
}

.sheet {
    position: relative;
    flex: 1;
    overflow: hidden;
    background: #fff;
    border-right: 1px solid #999;
}

.grid {
    width: 100%;
    table-layout: fixed;
    border-collapse: separate;
    border-spacing: 0;
    font-weight: 400;
    color: #000;
}

.grid col {
    width: 117px;
}

.grid .c-head {
    width: 57px;
}

.grid .c-f {
    width: 119px;
}

.grid .c-g {
    width: 161px;
}

.grid .c-rest {
    width: auto;
}

.grid th {
    height: 39px;
    padding-top: 2px;
    background: #e6e6e6;
    border-right: 1px solid #ababab;
    border-bottom: 1px solid #ababab;
    font-size: 22px;
    font-weight: 400;
    line-height: 30px;
}

.grid thead th {
    padding: 0 0 8px;
    border-bottom-color: #999;
    border-image: linear-gradient(#e6e6e6, #999 60%) 1;
}

.grid thead th:last-child {
    border-right: none;
}

.grid .corner {
    position: relative;
}

.corner::after {
    content: "";
    position: absolute;
    right: 3px;
    bottom: 3px;
    width: 31px;
    height: 30px;
    background: #b4b4b4;
    clip-path: polygon(100% 0, 100% 100%, 0 100%);
}

.grid .bond th {
    height: 40px;
}

.b {
    padding-top: 7px;
    border-right: 2px solid #3f66d0;
    border-bottom: 2px solid #3f66d0;
    font-family: "Liberation Serif", "Noto Sans CJK TC", serif;
    font-size: 26px;
    line-height: 30px;
    text-align: center;
}

.b.first {
    border-left: 2px solid #3f66d0;
}

.head .b {
    padding-top: 8px;
    border-top: 2px solid #3f66d0;
    font-size: 23px;
    font-weight: 700;
    line-height: 28px;
}

.head .b:nth-child(-n+4) {
    font-size: 24px;
    font-weight: 400;
}

.b.price {
    padding-left: 3px;
    font-size: 24px;
    text-align: left;
}

.shape {
    position: absolute;
}

.banner {
    top: 39px;
    left: 57px;
    width: 1100px;
    height: 95px;
    padding: 6px 15px;
    background: linear-gradient(#5f83cd, #3e6cc6 50%, #2b5fb9);
    box-shadow: 0 3px 6px rgba(0, 0, 0, 0.6);
    color: #fff;
    font-size: 26px;
    line-height: 34px;
}

.example {
    top: 139px;
    left: 147px;
}

.example span {
    position: absolute;
    top: 4px;
    left: 7px;
    color: #f00;
    font-size: 28px;
    font-weight: 500;
    line-height: 38px;
    white-space: nowrap;
}

.question {
    top: 136px;
    left: 288px;
    width: 638px;
    height: 112px;
    padding: 5px 6px;
    background: #fff;
    border: 3px solid #f5c828;
    color: #00e;
    font-family: "Liberation Serif", "Noto Sans CJK TC", serif;
    font-size: 28px;
    font-weight: 400;
    line-height: 36px;
}

.vscroll {
    display: flex;
    flex-direction: column;
    width: 29px;
    margin: 1px 3px 0 2px;
}

.vscroll button,
.hscroll button {
    display: flex;
    align-items: center;
    justify-content: center;
    width: 29px;
    height: 29px;
    background: #fff;
    border: 1px solid #bbb;
}

.thumb {
    background: #fff;
    border: 1px solid #ababab;
}

.track {
    background: #dadada;
}

.vscroll .thumb {
    flex: 265;
}

.vscroll .track {
    flex: 285;
}

/* 工作表索引標籤 */
.sheet-tabs {
    display: flex;
    height: 36px;
    border-top: 1px solid #999;
    border-bottom: 1px solid #bbb;
}

.sheet-nav {
    display: flex;
    align-items: center;
    gap: 28px;
    width: 122px;
    padding-left: 30px;
    border-right: 1px solid #999;
}

.sheet-tab {
    height: 32px;
    padding: 0 14px 7px 13px;
    border-right: 1px solid #999;
    font-size: 23px;
    font-weight: 400;
    line-height: 25px;
}

.sheet-tab.yellow {
    width: 33px;
    padding: 0 0 7px;
    background: #ff0;
    border: solid #e6e6e6;
    border-width: 0 2px;
    box-shadow: 1px 0 #999;
    color: #000;
}

.sheet-tab.yellow.wide {
    width: 38px;
}

.sheet-tab.last {
    border-right: none;
}

.sheet-tab.current {
    position: relative;
    margin-top: -1px;
    padding: 0 13px 6px 12px;
    background: linear-gradient(#fff 20%, #ffff99);
    border: 1px solid #999;
    border-width: 0 1px 2px;
    border-bottom-color: #217346;
    color: #217346;
    font-size: 24px;
}

.sheet-tab.cut {
    border-right: none;
    padding-right: 0;
}

.more {
    margin-left: 8px;
    line-height: 24px;
    font-weight: 700;
    color: #217346;
}

.add-sheet {
    margin-left: 13px;
}

.sheet-tabs .dots {
    margin-left: 23px;
}

.hscroll {
    display: flex;
    flex: 1;
    align-items: center;
    margin: 0 33px 0 17px;
}

.hscroll .thumb {
    flex: 616;
    height: 29px;
}

.hscroll .track {
    flex: 44;
    height: 29px;
}

/* 狀態列 */
.status {
    display: flex;
    align-items: center;
    height: 37px;
    padding: 0 8px;
    background: #f0f0f0;
    color: #555;
}

.ready,
.percent {
    padding-bottom: 4px;
}

.macro {
    margin-left: 23px;
}

.views {
    display: flex;
    align-self: stretch;
    margin-left: auto;
}

.views button {
    display: flex;
    align-items: center;
    justify-content: center;
    width: 48px;
}

.views .on {
    background: #cbcbcb;
}

.zoom-btn {
    margin-left: 5px;
}

.zoom {
    width: 176px;
    margin: 0 1px 0 4px;
    appearance: none;
    background: linear-gradient(#a0a0a0, #a0a0a0) center / 100% 1px no-repeat;
}

.zoom::-webkit-slider-thumb {
    appearance: none;
    width: 7px;
    height: 20px;
    background: #666;
}

.percent {
    width: 72px;
    text-align: right;
}

/* 工作列 */
.taskbar {
    position: relative;
    display: flex;
    justify-content: space-between;
    height: 70px;
    background: #010a14;
    color: #fff;
}

.scenery {
    position: absolute;
    width: 100%;
    height: 100%;
}

.apps,
.tray {
    position: relative;
    display: flex;
    align-items: center;
}

.start {
    margin-left: 29px;
}

.search {
    margin-left: 54px;
}

.divider {
    width: 5px;
    height: 46px;
    margin: 0 25px 0 35px;
    border: 1px solid #4a4644;
    border-width: 0 1px;
}

.app {
    display: flex;
    align-items: center;
    justify-content: center;
    align-self: stretch;
    width: 71px;
    margin-right: 16px;
    border: solid transparent;
    border-width: 4px 0;
}

.app.open {
    border-bottom-color: #9df0c4;
}

.up {
    margin-left: 16px;
}

.battery {
    margin-left: 17px;
}

.wifi {
    margin-left: 19px;
}

.volume {
    margin-left: 14px;
}

.ime {
    margin: 0 25px 0 19px;
    font-size: 20px;
    font-weight: 400;
}

.clock {
    line-height: 32px;
    text-align: center;
}

.notice {
    margin-left: 33px;
}

.peek {
    align-self: stretch;
    width: 8px;
    margin-left: 36px;
    border-left: 1px solid #6a7178;
}
```
